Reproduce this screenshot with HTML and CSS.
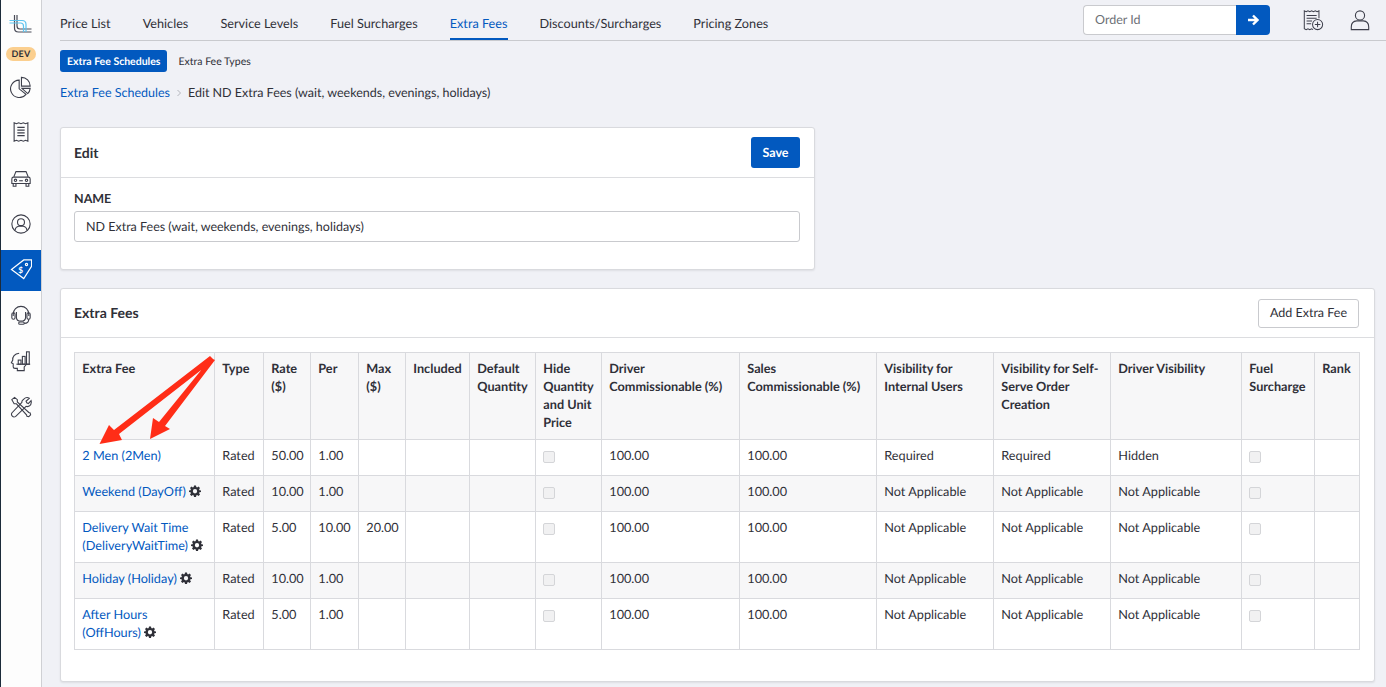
FILE: index.html
```html
<!DOCTYPE html>
<html lang="en">
<head>
<meta charset="utf-8">
<title>Extra Fees</title>
<link rel="stylesheet" href="styles.css">
</head>
<body>
<svg class="sprite" width="0" height="0" aria-hidden="true">
  <symbol id="gear" viewBox="0 0 24 24"><path fill="#2f3038" fill-rule="evenodd" d="M10 1h4l.6 3.100 1.700.7L19 3l3 3-1.800 2.700.7 1.700L24 11v3l-3.100.6-.7 1.700L22 19l-3 3-2.700-1.800-1.700.7L14 24h-4l-.6-3.100-1.700-.7L5 22l-3-3 1.800-2.700-.7-1.700L0 14v-3l3.100-.6.7-1.700L2 6l3-3 2.700 1.800 1.700-.7zM12 8.200a4.300 4.300 0 1 0 0 8.600 4.300 4.300 0 0 0 0-8.600z"/></symbol>
</svg>
<div class="app">
  <nav class="rail">
    <svg class="logo" viewBox="0 0 24 24" width="24" height="24" fill="none">
      <path d="M5.500 1v13q0 4 4 4h13M8 1v11q0 3 3 3h11.500" stroke="#4a4c58" stroke-width="1.200"/>
      <path d="M.5 6.500h12.500q4 0 4 4V18M.5 9h11q3 0 3 3v6" stroke="#5cc3ef" stroke-width="1.200"/>
    </svg>
    <span class="dev">DEV</span>
    <a class="rail-item rail-pie"><svg viewBox="0 0 24 24" fill="none" stroke="#3d3f4b" stroke-width="1.200"><path d="M10 4.500a9.500 9.500 0 1 0 7.500 15.500L10 14z"/><path d="M12.500 1.500a9.500 9.500 0 0 1 9.500 9.500h-9.500z"/><path d="M13 13.500h9a9 9 0 0 1-2.700 5.700z"/></svg></a>
    <a class="rail-item"><svg viewBox="0 0 24 24" fill="none" stroke="#3d3f4b" stroke-width="1.200"><path d="M4.500 2l2.500 1 2.500-1 2.500 1 2.500-1 2.500 1 2.500-1v20l-2.500-1-2.500 1-2.500-1-2.500 1-2.500-1-2.500 1z"/><path d="M8 7h8M8 10h8M8 13h8M8 16h8"/></svg></a>
    <a class="rail-item"><svg viewBox="0 0 24 24" fill="none" stroke="#3d3f4b" stroke-width="1.200"><path d="M6.500 5h11l2.500 6H4zM2 13q0-2 2-2h16q2 0 2 2v5H2zM3.500 18v3h3v-3M17.500 18v3h3v-3"/><circle cx="6" cy="14.500" r="1.300"/><circle cx="18" cy="14.500" r="1.300"/><path d="M10 15h4"/></svg></a>
    <a class="rail-item"><svg viewBox="0 0 24 24" fill="none" stroke="#3d3f4b" stroke-width="1.200"><circle cx="12" cy="12" r="10"/><circle cx="12" cy="10" r="3.800"/><path d="M5.500 19q.5-4 4-4.500h5q3.500.5 4 4.500"/></svg></a>
    <a class="rail-item active"><svg viewBox="0 0 24 24" fill="none" stroke="#fff" stroke-width="1.300"><path d="M1.600 11.500L15 1l8.500-.2V8L15 21.300z"/><circle cx="18" cy="6" r="1.200"/><text x="11.500" y="15" class="dollar" text-anchor="middle">$</text></svg></a>
    <a class="rail-item"><svg viewBox="0 0 24 24" fill="none" stroke="#3d3f4b" stroke-width="1.200"><path d="M3.500 12V10a8.500 8.500 0 0 1 17 0v2"/><rect x="2" y="8.500" width="3.500" height="7" rx="1.700"/><rect x="18.500" y="8.500" width="3.500" height="7" rx="1.700"/><path d="M7 7.500v6q0 4 5 4t5-4v-6"/><path d="M20.500 15.500q0 4.500-5 4.500"/><rect x="9.500" y="18.500" width="6" height="2.500" rx="1.200"/></svg></a>
    <a class="rail-item"><svg viewBox="0 0 24 24" fill="none" stroke="#3d3f4b" stroke-width="1.200"><path d="M10 3.500C5 4 2.500 7.500 3 11l-1.500 3 2 1v3.500q0 1.500 2 1.500h2.500v2.500h7.500v-4l3-3.500"/><path d="M7 15.500h15"/><rect x="9" y="11" width="3" height="4.500"/><rect x="13.500" y="7" width="3" height="8.500"/><rect x="18" y="2" width="3" height="13.500"/></svg></a>
    <a class="rail-item"><svg viewBox="0 0 24 24" fill="none" stroke="#3d3f4b" stroke-width="1.200"><path d="M2 4l3-2.500 3 2.500v2.500L20.500 18l1.500.5.500 2-2 2-2-.5-.5-1.500L7 8.500H4.500z"/><path d="M15 3.500Q18 .5 21 2.500l-3.500 3.200.8 1.800 1.700.7L23 5q1 4-2 6-2 1-3.500.3L6 22.500q-2 1-3.500-.5T2 18.500L13 7q-.5-2 2-3.500z"/></svg></a>
  </nav>
  <div class="main">
    <header class="topbar">
      <ul class="tabs">
        <li class="tab">Price List</li>
        <li class="tab">Vehicles</li>
        <li class="tab">Service Levels</li>
        <li class="tab">Fuel Surcharges</li>
        <li class="tab current">Extra Fees</li>
        <li class="tab">Discounts/Surcharges</li>
        <li class="tab">Pricing Zones</li>
      </ul>
      <div class="tools">
        <div class="search">
          <div class="search-input">Order Id</div>
          <button class="search-go" type="button"><svg viewBox="0 0 12 12" width="12" height="12" fill="none" stroke="#fff" stroke-width="2.400"><path d="M1 6h9M6 1.500L10.500 6 6 10.500"/></svg></button>
        </div>
        <svg class="tool-icon" viewBox="0 0 24 24" fill="none" stroke="#3d3f4b" stroke-width="1.100"><path d="M12 22.500l-1.500-1-2 1-2-1-2 1-2-1V2l2 1 2-1 2 1 2-1 2 1 2-1 2 1 2-1v8"/><path d="M5 7h11M5 10h11M5 13h6M5 16h5"/><circle cx="17" cy="17" r="5.500"/><path d="M17 14v6M14 17h6"/></svg>
        <svg class="tool-icon" viewBox="0 0 24 24" fill="none" stroke="#3d3f4b" stroke-width="1.200"><circle cx="12" cy="7" r="5"/><path d="M2.500 22.500v-3q0-6 6-6.500h7q6 .5 6 6.500v3z"/></svg>
      </div>
    </header>
    <div class="subnav">
      <span class="pill on">Extra Fee Schedules</span>
      <span class="pill">Extra Fee Types</span>
    </div>
    <div class="crumbs">
      <a class="link">Extra Fee Schedules</a>
      <svg class="crumb-sep" viewBox="0 0 6 8" width="6" height="8" fill="none" stroke="#b4b6bd"><path d="M1.500 1l3 3-3 3"/></svg>
      <span>Edit ND Extra Fees (wait, weekends, evenings, holidays)</span>
    </div>
    <section class="card card-edit">
      <div class="card-head head-edit">
        <h2>Edit</h2>
        <button class="btn primary" type="button">Save</button>
      </div>
      <div class="card-body">
        <label class="field-label">NAME</label>
        <div class="field">ND Extra Fees (wait, weekends, evenings, holidays)</div>
      </div>
    </section>
    <section class="card card-fees">
      <div class="card-head head-fees">
        <h2>Extra Fees</h2>
        <button class="btn outline" type="button">Add Extra Fee</button>
      </div>
      <div class="table-wrap">
        <table class="fees">
          <colgroup>
            <col class="c1"><col class="c2"><col class="c3"><col class="c4"><col class="c5"><col class="c6"><col class="c7"><col class="c8"><col class="c9"><col class="c10"><col class="c11"><col class="c12"><col class="c13"><col class="c14"><col class="c15">
          </colgroup>
          <thead>
            <tr>
              <th>Extra Fee</th><th>Type</th><th>Rate ($)</th><th>Per</th><th>Max ($)</th><th>Included</th><th>Default Quantity</th><th>Hide Quantity and Unit Price</th><th>Driver Commissionable (%)</th><th>Sales Commissionable (%)</th><th>Visibility for Internal Users</th><th>Visibility for Self-Serve Order Creation</th><th>Driver Visibility</th><th>Fuel Surcharge</th><th>Rank</th>
            </tr>
          </thead>
          <tbody>
            <tr>
              <td><a class="link">2 Men (2Men)</a></td><td>Rated</td><td>50.00</td><td>1.00</td><td></td><td></td><td></td><td><span class="check"></span></td><td>100.00</td><td>100.00</td><td>Required</td><td>Required</td><td>Hidden</td><td><span class="check"></span></td><td></td>
            </tr>
            <tr>
              <td><a class="link">Weekend (DayOff)</a> <svg class="gear" width="12" height="12"><use href="#gear"/></svg></td><td>Rated</td><td>10.00</td><td>1.00</td><td></td><td></td><td></td><td><span class="check"></span></td><td>100.00</td><td>100.00</td><td>Not Applicable</td><td>Not Applicable</td><td>Not Applicable</td><td><span class="check"></span></td><td></td>
            </tr>
            <tr>
              <td><a class="link">Delivery Wait Time (DeliveryWaitTime)</a> <svg class="gear" width="12" height="12"><use href="#gear"/></svg></td><td>Rated</td><td>5.00</td><td>10.00</td><td>20.00</td><td></td><td></td><td><span class="check"></span></td><td>100.00</td><td>100.00</td><td>Not Applicable</td><td>Not Applicable</td><td>Not Applicable</td><td><span class="check"></span></td><td></td>
            </tr>
            <tr>
              <td><a class="link">Holiday (Holiday)</a> <svg class="gear" width="12" height="12"><use href="#gear"/></svg></td><td>Rated</td><td>10.00</td><td>1.00</td><td></td><td></td><td></td><td><span class="check"></span></td><td>100.00</td><td>100.00</td><td>Not Applicable</td><td>Not Applicable</td><td>Not Applicable</td><td><span class="check"></span></td><td></td>
            </tr>
            <tr>
              <td><a class="link">After Hours (OffHours)</a> <svg class="gear" width="12" height="12"><use href="#gear"/></svg></td><td>Rated</td><td>5.00</td><td>1.00</td><td></td><td></td><td></td><td><span class="check"></span></td><td>100.00</td><td>100.00</td><td>Not Applicable</td><td>Not Applicable</td><td>Not Applicable</td><td><span class="check"></span></td><td></td>
            </tr>
          </tbody>
        </table>
      </div>
    </section>
  </div>
</div>
<svg class="arrows" viewBox="0 0 1386 687" width="1386" height="687" aria-hidden="true">
  <path fill="#ff2d17" d="M210 356L214 360L119 434L122 440L99.500 444L109 425L114 430ZM211 358L215 360L165 426L170 429L150 439L153 418L159 422Z"/>
</svg>
</body>
</html>
```
FILE: styles.css
```css
* { box-sizing: border-box; }
html, body { margin: 0; height: 100%; overflow: hidden; }
body {
  background: #f0f1f6;
  color: #2f3038;
  font-family: Lato, "Liberation Sans", sans-serif;
  font-size: 12.500px;
  line-height: 18px;
  position: relative;
  text-rendering: geometricPrecision;
}
.sprite { position: absolute; }
.app { display: flex; height: 687px; }
.rail {
  flex: 0 0 42px;
  background: #fdfdfd;
  border-left: 1px solid #1c2b3a;
  border-right: 1px solid #cfd0d4;
  display: flex;
  flex-direction: column;
  align-items: center;
}
.logo { margin-top: 14px; flex: none; }
.dev {
  margin-top: 9px;
  width: 30px;
  height: 14px;
  border-radius: 7px;
  background: #fbcf8f;
  color: #2f3038;
  font-size: 9px;
  font-weight: 700;
  line-height: 14px;
  text-align: center;
  letter-spacing: .2px;
  flex: none;
}
.rail-item {
  width: 40px;
  height: 45.600px;
  display: flex;
  align-items: center;
  justify-content: center;
  flex: none;
}
.rail-item svg { width: 22px; height: 22px; }
.rail-pie { margin-top: 3px; }
.rail-item.active { background: #0259bf; height: 41px; margin: 3.600px 0 2px; }
.dollar { font: 700 9px Lato, sans-serif; fill: #fff; stroke: none; }
.main { flex: 1; min-width: 0; padding-left: 18px; padding-right: 11px; }
.topbar {
  height: 41px;
  margin-right: -11px;
  border-bottom: 1px solid #c9cace;
  display: flex;
  justify-content: space-between;
}
.tabs { list-style: none; margin: 0; padding: 0; display: flex; gap: 32px; height: 40px; }
.tab { padding-top: 14px; height: 40px; color: #2f3038; font-size: 12.700px; }
.tab.current { color: #0259bf; border-bottom: 2px solid #0259bf; }
.tools { display: flex; align-items: flex-start; }
.search { display: flex; margin-top: 5px; height: 30px; width: 187px; margin-right: 32px; }
.search-input {
  flex: 1;
  background: #fff;
  border: 1px solid #c9cace;
  border-right: 0;
  border-radius: 4px 0 0 4px;
  padding: 5px 11px;
  color: #6d6f76;
}
.search-go {
  width: 34px;
  border: 0;
  padding: 0;
  background: #0259bf;
  border-radius: 0 4px 4px 0;
  display: flex;
  align-items: center;
  justify-content: center;
}
.tool-icon { margin-top: 8px; margin-right: 25px; width: 22px; height: 24px; }
.tool-icon:last-child { margin-right: 15px; }
.subnav { display: flex; align-items: center; margin-top: 9px; height: 22px; gap: 11px; }
.pill { font-size: 10.500px; line-height: 20px; padding-top: 2px; border-radius: 3px; color: #2f3038; }
.pill.on { background: #0259bf; color: #fff; font-weight: 700; padding: 2px 7px 0; }
.crumbs { display: flex; align-items: center; margin-top: 12px; height: 18px; }
.crumb-sep { margin: 0 6px 0 6px; }
.link { color: #0259bf; }
.card {
  background: #fff;
  border: 1px solid #d9dade;
  border-radius: 3px;
  box-shadow: 0 1px 2px rgba(0, 0, 0, .08);
}
.card-edit { width: 755px; height: 143px; margin-top: 25px; }
.card-fees { height: 394px; margin-top: 18px; }
.card-head {
  display: flex;
  align-items: center;
  justify-content: space-between;
  padding: 0 15px 0 13px;
  border-bottom: 1px solid #dcdde0;
}
.head-edit { height: 50px; padding-right: 14px; }
.head-fees { height: 49px; }
.card-head h2 { margin: 0; font-size: 14px; font-weight: 700; line-height: 18px; }
.btn { font: 12.500px/18px Lato, sans-serif; border-radius: 3px; padding: 0; text-rendering: geometricPrecision; }
.btn.primary {
  width: 49px;
  height: 31px;
  background: #0259bf;
  color: #fff;
  border: 0;
  font-weight: 700;
}
.btn.outline {
  width: 101px;
  height: 29px;
  background: #fff;
  border: 1px solid #c9cace;
  color: #2f3038;
}
.card-body { padding: 12px 14px 0 13px; }
.field-label { display: block; font-size: 12.500px; font-weight: 700; line-height: 18px; }
.field {
  margin-top: 3px;
  height: 31px;
  border: 1px solid #c9cace;
  border-radius: 3px;
  padding: 6px 11px;
}
.table-wrap { padding: 14px 15px 0 13px; }
.fees { table-layout: fixed; width: 1285px; border-collapse: collapse; }
.c1 { width: 140px; } .c2 { width: 49px; } .c3 { width: 47px; } .c4 { width: 48px; } .c5 { width: 47px; }
.c6 { width: 64px; } .c7 { width: 66px; } .c8 { width: 66px; } .c9 { width: 138px; } .c10 { width: 137px; }
.c11 { width: 117px; } .c12 { width: 117px; } .c13 { width: 131px; } .c14 { width: 73px; } .c15 { width: 45px; }
.fees th, .fees td {
  border: 1px solid #d9dade;
  padding: 6px 7.300px 8px;
  text-align: left;
  vertical-align: top;
  font-size: 12.700px;
  line-height: 18px;
}
.fees th { font-weight: 700; background: #f7f7f8; height: 87px; }
.fees td { height: 36px; }
.fees tbody tr:nth-child(even) td { background: #f7f7f8; }
.fees tbody tr:nth-child(3) td { height: 51px; }
.fees tbody tr:nth-child(5) td { height: 51px; }
.gear { vertical-align: -1px; }
.check {
  display: block;
  width: 12px;
  height: 12px;
  margin-top: 5px;
  background: #f1f1f2;
  border: 1px solid #d4d5d8;
  border-radius: 2px;
}
.arrows { position: absolute; left: 0; top: 0; pointer-events: none; }
```
